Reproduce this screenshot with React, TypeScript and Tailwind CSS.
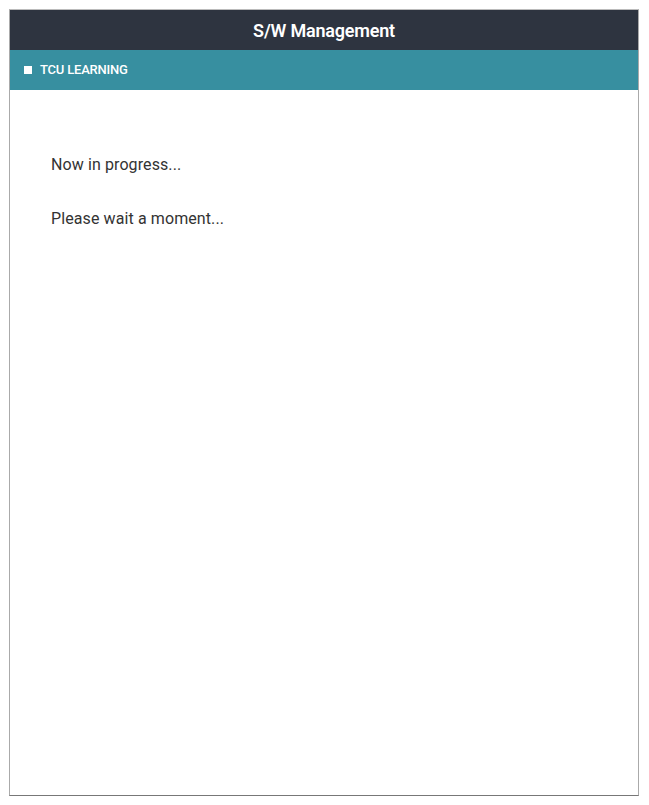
export default function App() {
  return (
    <div className="min-h-[805px] bg-white pl-[9px] pr-[10px] pt-[9px] pb-[9px] font-['Roboto',sans-serif]">
      <div className="flex h-[787px] flex-col border border-t-[#bbb] border-x-[#aaa] border-b-[#777]">
        <header className="flex h-[40px] items-center justify-center bg-[#2e3440] text-[18px] font-semibold tracking-[-0.2px] text-white">
          S/W Management
        </header>
        <div className="flex h-[40px] items-center gap-[8px] bg-[#378fa0] pl-[14px] text-[13px] font-medium tracking-[-0.2px] text-white">
          <span className="h-[8px] w-[8px] bg-white" />
          TCU LEARNING
        </div>
        <main className="flex flex-1 flex-col gap-[32px] pl-[41px] pt-[64px] text-[16px] leading-[22px] tracking-[0.1px] text-[#333]">
          <p>Now in progress...</p>
          <p>Please wait a moment...</p>
        </main>
      </div>
    </div>
  );
}
